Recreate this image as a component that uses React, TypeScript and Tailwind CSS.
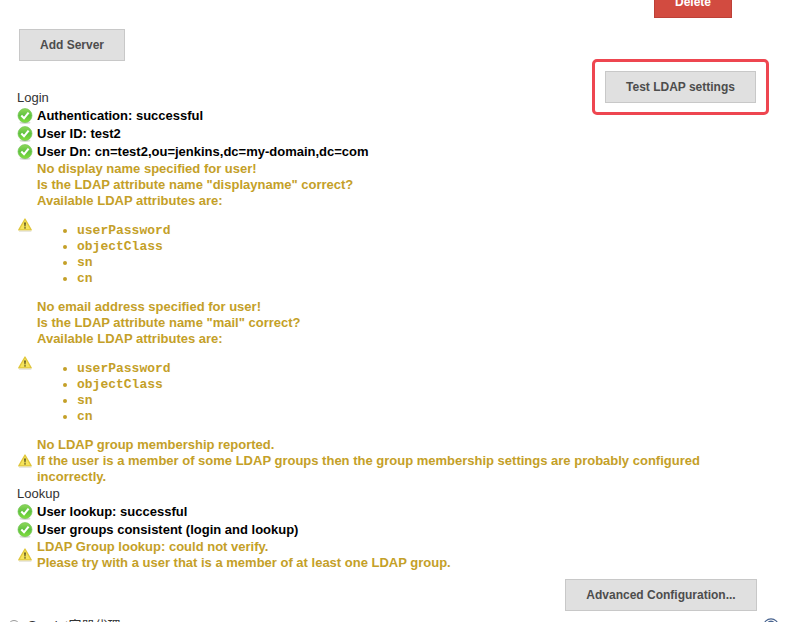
import type { ReactNode } from "react";

function Check() {
  return (
    <svg width="16" height="16" viewBox="0 0 16 16" className="shrink-0">
      <defs>
        <linearGradient id="ok" x1="0" y1="0" x2="0" y2="1">
          <stop offset="0" stopColor="#8fd85a" />
          <stop offset="0.5" stopColor="#5fc23f" />
          <stop offset="1" stopColor="#82df3c" />
        </linearGradient>
      </defs>
      <ellipse cx="8" cy="14.8" rx="5.5" ry="1.1" fill="#d5d9d2" />
      <circle cx="8" cy="7.6" r="7" fill="url(#ok)" stroke="#74c456" strokeWidth="0.7" />
      <path d="M4.3 7.6 7 10.3 11.6 4.6" fill="none" stroke="#fff" strokeWidth="2.1" />
    </svg>
  );
}

function Warning() {
  return (
    <svg width="16" height="16" viewBox="0 0 16 16" className="shrink-0">
      <path d="M8 2 14.2 12.9H1.8Z" fill="#f6e45a" stroke="#e0c63c" strokeWidth="1.3" strokeLinejoin="round" />
      <path d="M2 14.2h12.3" stroke="#d8d5c6" strokeWidth="0.8" />
      <path d="M7.1 5.5h1.8L8.5 9.4h-1Z" fill="#5a5220" />
      <rect x="7.3" y="10.2" width="1.4" height="1.4" fill="#5a5220" />
    </svg>
  );
}

function Ok({ children }: { children: ReactNode }) {
  return (
    <div className="flex h-[18px] items-center gap-1 font-bold text-black">
      <Check />
      <span>{children}</span>
    </div>
  );
}

function Warn({ children, raised = false }: { children: ReactNode; raised?: boolean }) {
  return (
    <div className="flex items-center gap-1 font-bold text-[#c4a028]">
      <div className={raised ? "pb-2.5" : ""}>
        <Warning />
      </div>
      <div>{children}</div>
    </div>
  );
}

function Attributes() {
  return (
    <ul className="mb-3 mt-[14px] list-disc pl-10 font-['Liberation_Mono','Courier_New',monospace]">
      {["userPassword", "objectClass", "sn", "cn"].map((name) => (
        <li key={name}>{name}</li>
      ))}
    </ul>
  );
}

function Button({ children, className }: { children: ReactNode; className: string }) {
  return (
    <button
      className={`flex h-8 items-center justify-center border border-[#c8c8c8] bg-[#e0e0e0] text-[12px] font-bold text-[#4d4d4d] ${className}`}
    >
      {children}
    </button>
  );
}

export default function App() {
  return (
    <div className="h-[622px] w-[797px] overflow-hidden bg-white font-['Liberation_Sans',Arial,'Noto_Sans_CJK_SC',sans-serif] text-[13px] leading-4 text-[#333]">
      <div className="flex h-[29px] items-start justify-end pr-[65px]">
        <button className="-mt-[14px] h-8 w-[78px] border border-[#bd4037] bg-[#d24b40] text-[12px] font-bold text-white">
          Delete
        </button>
      </div>
      <div className="flex h-[60px] items-start justify-between pl-[19px] pr-7">
        <Button className="w-[106px]">Add Server</Button>
        <div className="mt-[30px] flex h-14 w-[177px] items-center justify-center rounded-[5px] border-[3px] border-[#ee4650]">
          <Button className="w-[151px]">Test LDAP settings</Button>
        </div>
      </div>
      <main className="w-[720px] pl-[17px]">
        <div className="h-[18px] leading-[18px]">Login</div>
        <Ok>Authentication: successful</Ok>
        <Ok>User ID: test2</Ok>
        <Ok>User Dn: cn=test2,ou=jenkins,dc=my-domain,dc=com</Ok>
        <Warn raised>
          No display name specified for user!
          <br />
          Is the LDAP attribute name "displayname" correct?
          <br />
          Available LDAP attributes are:
          <Attributes />
        </Warn>
        <Warn raised>
          No email address specified for user!
          <br />
          Is the LDAP attribute name "mail" correct?
          <br />
          Available LDAP attributes are:
          <Attributes />
        </Warn>
        <Warn>
          No LDAP group membership reported.
          <br />
          If the user is a member of some LDAP groups then the group membership settings are probably configured
          <br />
          incorrectly.
        </Warn>
        <div className="h-[18px] leading-[18px]">Lookup</div>
        <Ok>User lookup: successful</Ok>
        <Ok>User groups consistent (login and lookup)</Ok>
        <Warn>
          LDAP Group lookup: could not verify.
          <br />
          Please try with a user that is a member of at least one LDAP group.
        </Warn>
      </main>
      <div className="flex justify-end pr-10 pt-2">
        <Button className="w-48">Advanced Configuration...</Button>
      </div>
      <div className="flex items-start justify-between pl-2 pr-[18px] pt-[7px]">
        <div className="flex items-start gap-2">
          <span className="mt-[2px] h-3 w-3 rounded-full border border-[#999]" />
          <span className="whitespace-nowrap leading-4">Servlet容器代理</span>
        </div>
        <svg width="16" height="16" viewBox="0 0 16 16" fill="none" stroke="#4a6590">
          <circle cx="8" cy="8" r="7.2" strokeWidth="1.2" />
          <path d="M5.3 6a2.7 2.7 0 0 1 5.4 0c0 2-2.7 2-2.7 4M8 11v2" strokeWidth="1.8" />
        </svg>
      </div>
    </div>
  );
}
